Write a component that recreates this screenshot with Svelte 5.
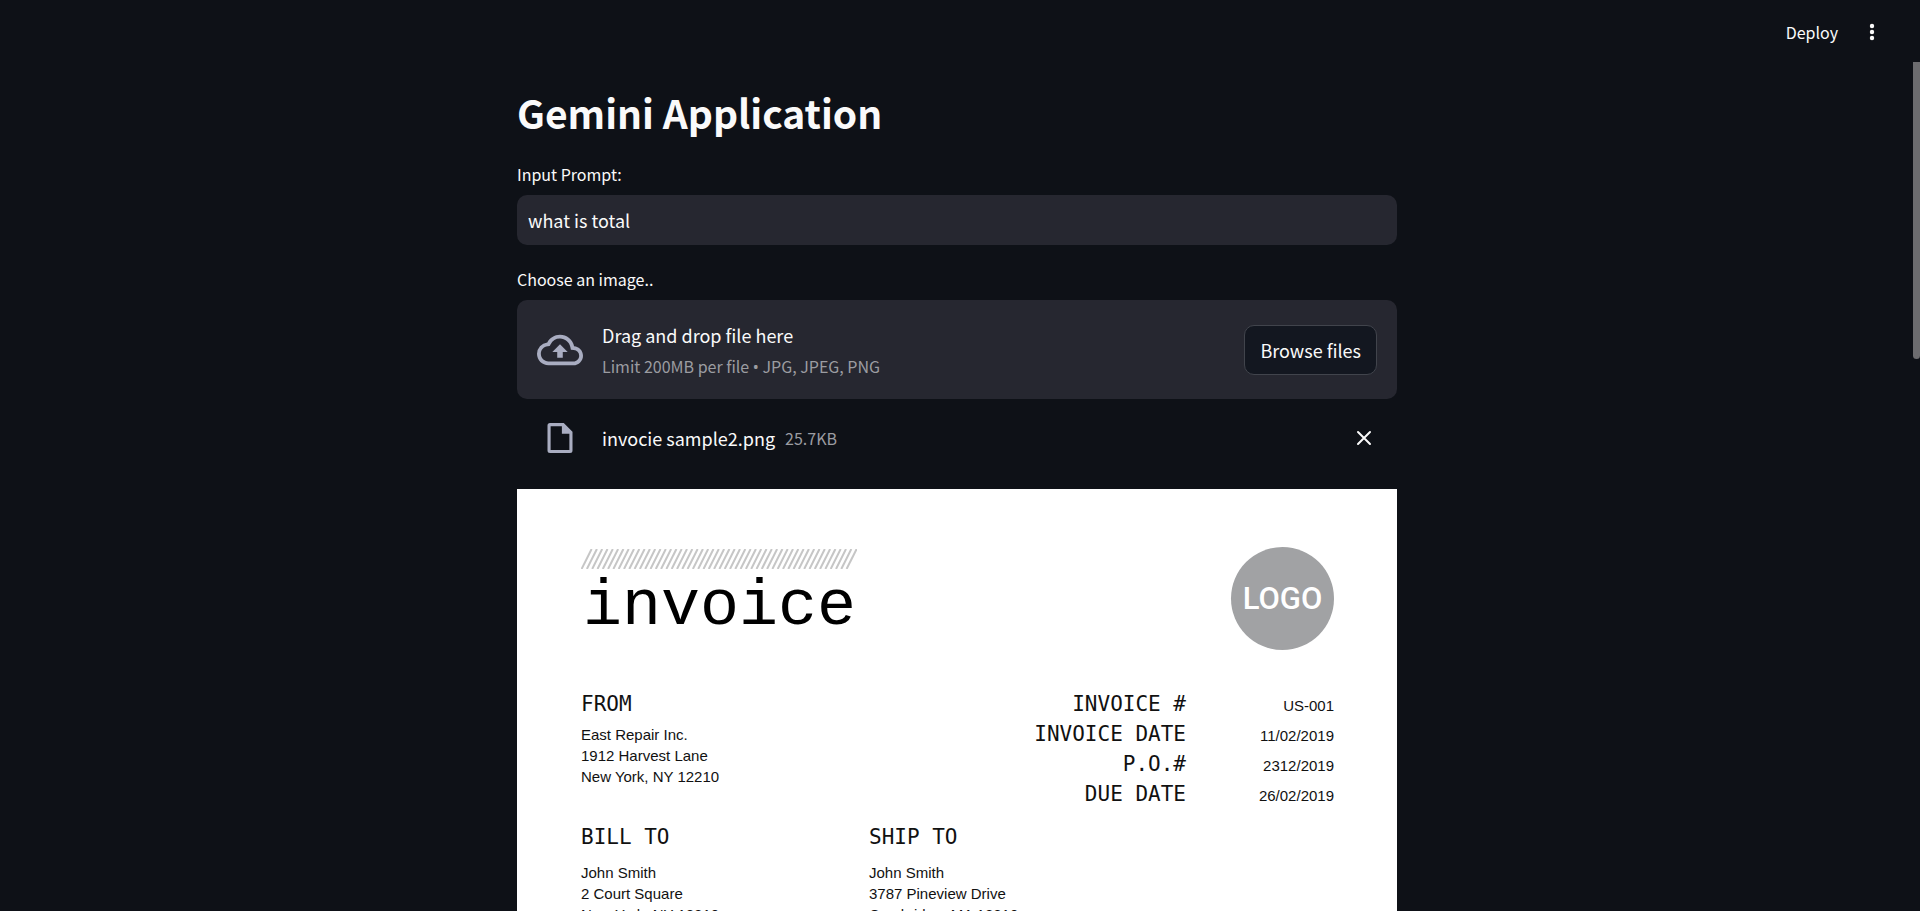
<script>
  let prompt = $state('what is total');

  const stripes = Array.from({ length: 51 }, (_, i) => i);

  const details = [
    ['INVOICE #', 'US-001'],
    ['INVOICE DATE', '11/02/2019'],
    ['P.O.#', '2312/2019'],
    ['DUE DATE', '26/02/2019']
  ];

  const parties = [
    { title: 'BILL TO', lines: ['John Smith', '2 Court Square', 'New York, NY 12210'] },
    { title: 'SHIP TO', lines: ['John Smith', '3787 Pineview Drive', 'Cambridge, MA 12210'] }
  ];
</script>

<div class="app">
  <header>
    <button class="deploy">Deploy</button>
    <button class="menu" aria-label="Main menu">
      <svg width="20" height="20" viewBox="0 0 20 20" fill="currentColor">
        <circle cx="10" cy="4" r="2.2" />
        <circle cx="10" cy="10" r="2.2" />
        <circle cx="10" cy="16" r="2.2" />
      </svg>
    </button>
  </header>

  <main>
    <h1>Gemini Application</h1>

    <div class="field">
      <label for="prompt">Input Prompt:</label>
      <input id="prompt" type="text" bind:value={prompt} />
    </div>

    <div class="field">
      <label for="browse">Choose an image..</label>
      <section class="dropzone">
        <svg class="cloud" viewBox="0 0 24 24" fill="currentColor">
          <path d="M19.35 10.04A7.49 7.49 0 0 0 12 4C9.11 4 6.6 5.64 5.35 8.04A5.994 5.994 0 0 0 0 14c0 3.31 2.69 6 6 6h13c2.76 0 5-2.24 5-5 0-2.64-2.05-4.78-4.65-4.96zM19 18H6c-2.21 0-4-1.79-4-4 0-2.05 1.53-3.76 3.56-3.97l1.07-.11.5-.95A5.469 5.469 0 0 1 12 6c2.62 0 4.88 1.86 5.39 4.43l.3 1.5 1.53.11A2.98 2.98 0 0 1 22 15c0 1.65-1.35 3-3 3zM8 13h2.55v3h2.9v-3H16l-4-4z" />
        </svg>
        <div class="hint">
          <span>Drag and drop file here</span>
          <small>Limit 200MB per file <span class="bullet">•</span> JPG, JPEG, PNG</small>
        </div>
        <button id="browse" class="browse">Browse files</button>
      </section>
      <div class="file">
        <svg class="doc" viewBox="0 0 24 24" fill="currentColor">
          <path fill-rule="evenodd" d="M4.500 0H15l7 7v15a2 2 0 0 1-2 2H4a2 2 0 0 1-2-2V2a2 2 0 0 1 2-2zM4.500 2.500v19h15V8.500H13.500V2.500z" />
        </svg>
        <span class="name">invocie sample2.png</span>
        <small>25.7KB</small>
        <button class="remove" aria-label="Remove file">
          <svg width="16" height="16" viewBox="0 0 16 16" fill="none" stroke="currentColor" stroke-width="2" stroke-linecap="round">
            <path d="M2 2l12 12M14 2L2 14" />
          </svg>
        </button>
      </div>
    </div>

    <article class="invoice">
      <div class="masthead">
        <div class="wordmark">
          <svg width="276" height="20" viewBox="0 0 276 20" stroke="#c6c6c6" stroke-width="2">
            {#each stripes as i}
              <line x1={0.6 + i * 5.3} y1="20" x2={10.6 + i * 5.3} y2="0" />
            {/each}
          </svg>
          <div class="word">invoice</div>
        </div>
        <div class="logo">LOGO</div>
      </div>

      <div class="origin">
        <section>
          <h2>FROM</h2>
          <p>East Repair Inc.</p>
          <p>1912 Harvest Lane</p>
          <p>New York, NY 12210</p>
        </section>
        <dl>
          {#each details as [label, value]}
            <dt>{label}</dt>
            <dd>{value}</dd>
          {/each}
        </dl>
      </div>

      <div class="parties">
        {#each parties as party}
          <section>
            <h2>{party.title}</h2>
            {#each party.lines as line}
              <p>{line}</p>
            {/each}
          </section>
        {/each}
      </div>
    </article>
  </main>

  <div class="thumb"></div>
</div>

<style>
  :global(body) {
    margin: 0;
    background: #0e1117;
  }

  .app {
    position: relative;
    height: 100vh;
    overflow: hidden;
    color: #fafafa;
    font-family: 'Noto Sans CJK SC', 'Noto Sans', sans-serif;
    font-size: 18px;
    line-height: 30px;
  }

  button {
    padding: 0;
    border: 0;
    background: none;
    color: inherit;
    font: inherit;
    cursor: pointer;
  }

  svg {
    display: block;
  }

  header {
    display: flex;
    justify-content: flex-end;
    align-items: center;
    gap: 24px;
    height: 64px;
    padding-right: 38px;
  }

  .deploy {
    font-size: 16px;
  }

  main {
    display: flex;
    flex-direction: column;
    width: 880px;
    max-width: 100%;
    margin: 0 auto;
    padding-right: 6px;
    box-sizing: content-box;
  }

  h1 {
    margin: 15px 0;
    font-size: 39px;
    font-weight: 700;
    line-height: 66px;
  }

  .field {
    display: flex;
    flex-direction: column;
    margin-bottom: 20px;
  }

  label {
    margin-bottom: 7px;
    font-size: 16px;
    line-height: 28px;
  }

  input {
    box-sizing: border-box;
    width: 100%;
    height: 50px;
    padding: 0 11px;
    border: 0;
    border-radius: 10px;
    outline: 0;
    background: #262730;
    color: inherit;
    font: inherit;
  }

  .dropzone {
    display: flex;
    align-items: center;
    box-sizing: border-box;
    min-height: 99px;
    padding: 0 20px;
    border-radius: 10px;
    background: #262730;
  }

  .cloud {
    width: 46px;
    height: 46px;
    margin-right: 19px;
    color: #a9adc1;
  }

  .hint {
    display: flex;
    flex-direction: column;
    flex: 1;
    gap: 1px;
    padding-top: 2px;
  }

  small {
    color: #9b9ca1;
    font-size: 16px;
  }

  .bullet {
    font-family: 'Noto Sans', sans-serif;
  }

  .browse {
    box-sizing: border-box;
    height: 50px;
    padding: 0 15px;
    border: 1px solid #41444c;
    border-radius: 10px;
    background: #131720;
  }

  .file {
    display: flex;
    align-items: center;
    height: 70px;
    padding: 8px 25px 0 28px;
    box-sizing: border-box;
  }

  .doc {
    width: 30px;
    height: 30px;
    margin-right: 27px;
    color: #a9adc1;
  }

  .name {
    margin-right: 10px;
  }

  .remove {
    margin-left: auto;
  }

  .invoice {
    padding: 58px 63px 40px 64px;
    background: #fff;
    color: #111;
    font-family: 'Liberation Sans', Arial, sans-serif;
    font-size: 15px;
    line-height: 21px;
  }

  .masthead,
  .origin {
    display: flex;
    justify-content: space-between;
  }

  .wordmark {
    padding-top: 2px;
  }

  .word {
    padding-left: 2px;
    color: #000;
    font-family: 'Liberation Mono', monospace;
    font-size: 65px;
    line-height: 77px;
  }

  .logo {
    display: flex;
    align-items: center;
    justify-content: center;
    width: 103px;
    height: 103px;
    border-radius: 50%;
    background: #a1a2a4;
    color: #fff;
    font-family: Roboto, sans-serif;
    font-size: 31px;
    font-weight: 500;
  }

  .origin {
    margin-top: 39px;
  }

  h2,
  dt {
    margin: 0;
    font-family: 'DejaVu Sans Mono', monospace;
    font-size: 21px;
    font-weight: 400;
    line-height: 30px;
  }

  p {
    margin: 0;
  }

  .origin h2 {
    margin-bottom: 5px;
  }

  dl {
    display: grid;
    grid-template-columns: auto 148px;
    grid-auto-rows: 30px;
    align-items: baseline;
    align-content: start;
    margin: 0;
    text-align: right;
  }

  dd {
    margin: 0;
  }

  .parties {
    display: grid;
    grid-template-columns: 288px 1fr;
    margin-top: 13px;
  }

  .parties h2 {
    margin-bottom: 10px;
  }

  .thumb {
    position: absolute;
    top: 62px;
    right: 0;
    width: 7px;
    height: 297px;
    border-radius: 0 0 4px 4px;
    background: #6c6c6f;
  }
</style>
